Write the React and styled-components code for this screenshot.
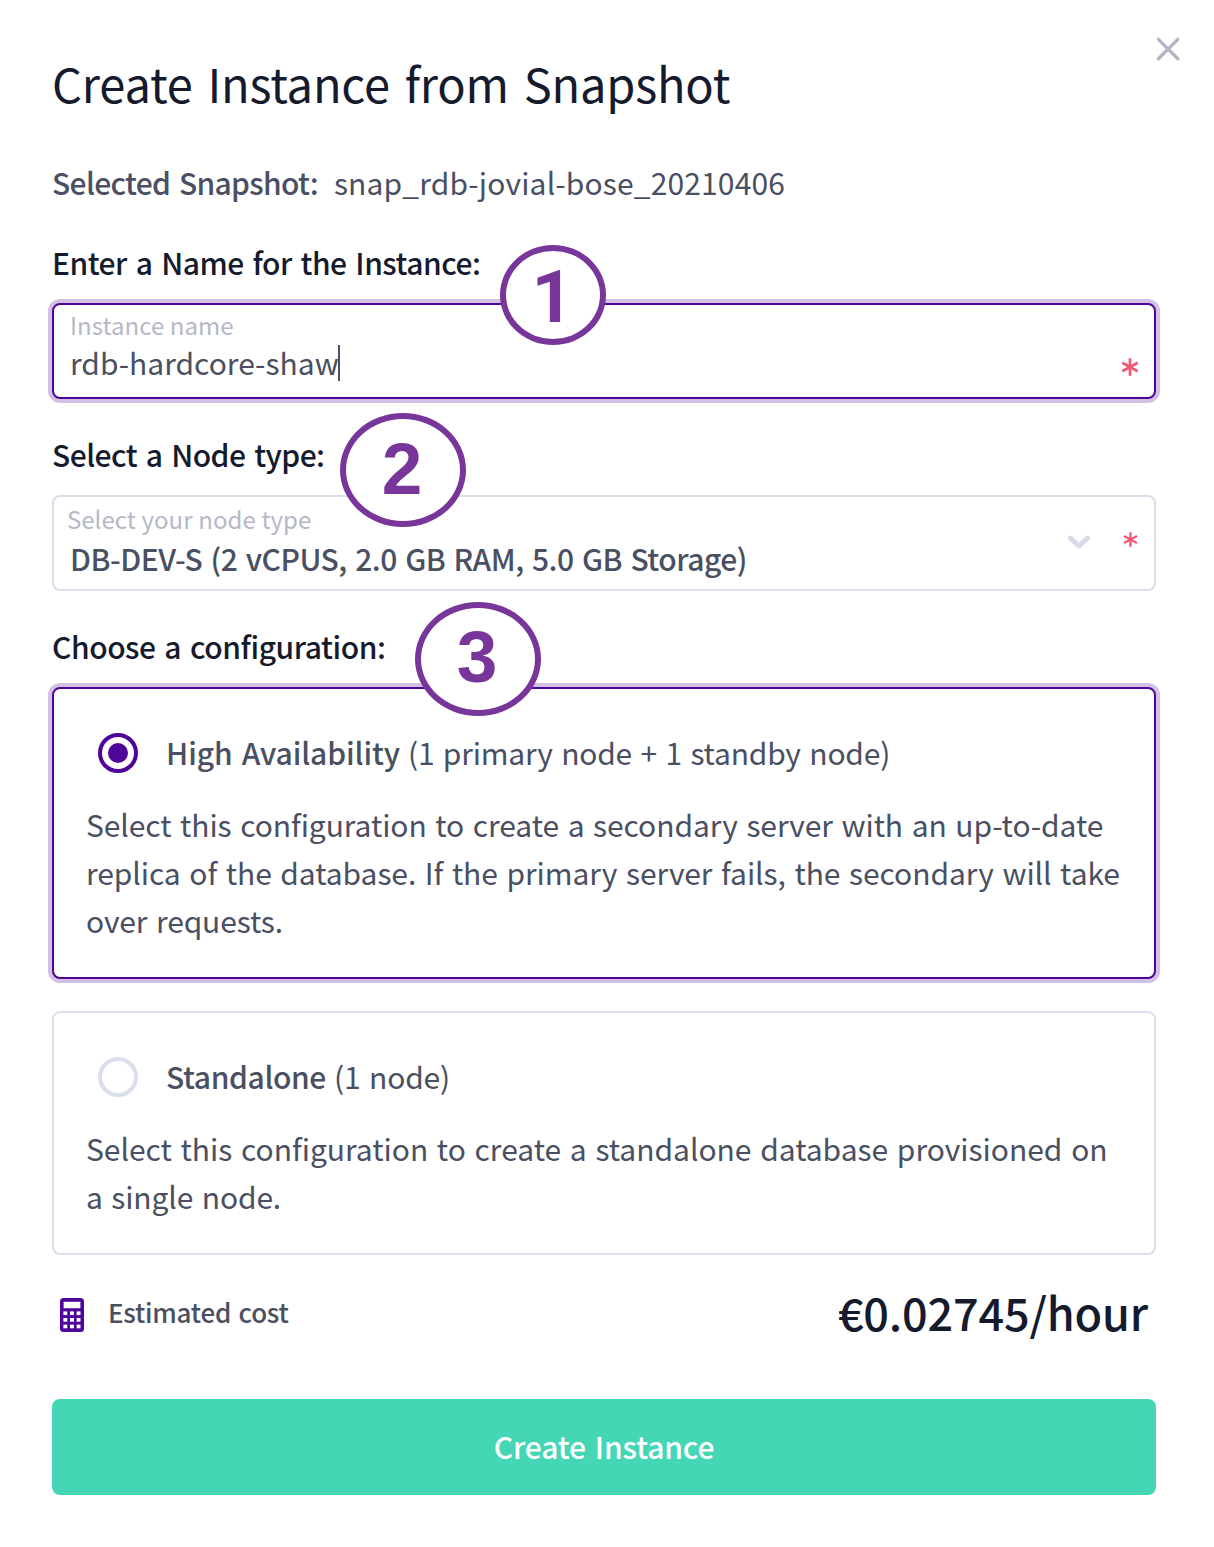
import React from "react";
import styled, { createGlobalStyle } from "styled-components";

const ink = "#151a2d";
const body = "#4a4f62";
const muted = "#b5b8c6";
const purple = "#4f0599";
const line = "#d9dfeb";
const family = '"Noto Sans CJK SC", "Noto Sans", sans-serif';

const GlobalStyle = createGlobalStyle`
  * { box-sizing: border-box; }
  body { margin: 0; background: #fff; font-family: ${family}; }
`;

const Text = styled.span`
  display: ${(p) => (p.$block ? "block" : "inline-block")};
  font-size: ${(p) => p.$size || 30}px;
  font-weight: ${(p) => p.$weight || 400};
  letter-spacing: ${(p) => p.$track || 0}px;
  word-spacing: ${(p) => p.$words || 0}px;
  color: ${(p) => p.$color || body};
  white-space: nowrap;
`;

const Modal = styled.main`
  position: relative;
  display: flex;
  flex-direction: column;
  width: 1214px;
  height: 1547px;
  padding: 52px 58px 52px 52px;
  background: #fff;
`;

const CloseButton = styled.button`
  position: absolute;
  top: 34px;
  right: 31px;
  width: 30px;
  height: 30px;
  padding: 0;
  border: 0;
  background: none;
  svg { display: block; }
`;

const Title = styled.h1`
  margin: 0 0 46px;
  height: 60px;
  line-height: 62px;
  font-size: 47px;
`;

const SnapshotRow = styled.div`
  display: flex;
  gap: 16px;
  height: 48px;
  line-height: 48px;
  margin-bottom: 32px;
`;

const SectionLabel = styled.div`
  position: relative;
  height: 48px;
  line-height: 48px;
  margin-bottom: 17px;
`;

const Badge = styled.span`
  position: absolute;
  z-index: 1;
  left: ${(p) => p.$x}px;
  top: ${(p) => p.$y}px;
  width: ${(p) => p.$w}px;
  height: ${(p) => p.$h}px;
  padding-top: ${(p) => p.$drop || 0}px;
  padding-bottom: ${(p) => p.$lift || 0}px;
  padding-right: ${(p) => p.$nudge || 2}px;
  display: flex;
  align-items: center;
  justify-content: center;
  border: 6px solid #78359a;
  border-radius: 50%;
  background: #fff;
  color: #78359a;
  font: bold 73px/1 ${(p) => p.$font || '"Liberation Sans", Arial'}, sans-serif;
`;

const Box = styled.div`
  flex: none;
  border: 2px solid ${(p) => (p.$active ? purple : line)};
  border-radius: 8px;
  box-shadow: ${(p) => (p.$active ? "0 0 0 4px #d3c0e5" : "none")};
  background: #fff;
`;

const Field = styled(Box)`
  display: flex;
  justify-content: space-between;
  height: 96px;
  margin-bottom: 31px;
  padding: ${(p) => p.$pad};
`;

const FieldText = styled.div`
  display: flex;
  flex-direction: column;
`;

const FieldLine = styled.div`
  display: flex;
  align-items: center;
  height: ${(p) => p.$h}px;
  line-height: ${(p) => p.$h}px;
  padding-left: ${(p) => p.$indent || 0}px;
`;

const Caret = styled.i`
  width: 2px;
  height: 36px;
  margin: 2px 0 0 -1px;
  background: ${body};
`;

const FieldIcons = styled.div`
  display: flex;
  align-items: center;
  gap: ${(p) => p.$gap || 0}px;
  padding-top: ${(p) => p.$top || 0}px;
  padding-bottom: ${(p) => p.$bottom || 0}px;
`;

const RequiredIcon = styled.svg`
  margin-bottom: ${(p) => p.$raise || 0}px;
`;

const Option = styled(Box)`
  height: ${(p) => p.$h}px;
  margin-bottom: ${(p) => p.$after}px;
  padding: 40px 30px 0 32px;
`;

const OptionHead = styled.div`
  display: flex;
  align-items: center;
  height: 48px;
  line-height: 46px;
  padding-left: 12px;
  margin-bottom: 23px;
`;

const OptionText = styled(Text)`
  height: 48px;
`;

const Radio = styled.span`
  flex: none;
  display: grid;
  place-items: center;
  width: 40px;
  height: 40px;
  margin-right: ${(p) => p.$after}px;
  border: 4px solid ${(p) => (p.$checked ? purple : line)};
  border-radius: 50%;
  &::after {
    content: "";
    width: 20px;
    height: 20px;
    border-radius: 50%;
    background: ${(p) => (p.$checked ? purple : "transparent")};
  }
`;

const OptionNote = styled(OptionText)`
  margin-left: ${(p) => p.$before}px;
`;

const Description = styled.p`
  margin: 0;
  line-height: 48px;
`;

const CostRow = styled.div`
  display: flex;
  align-items: center;
  height: 64px;
  line-height: 64px;
  margin-bottom: 56px;
  padding: 0 8px;
`;

const CostLabel = styled(Text)`
  flex: 1;
  margin-left: 24px;
  padding-top: 2px;
`;

const Price = styled(Text)`
  padding-top: 2px;
`;

const CalcIcon = styled.svg`
  display: block;
  margin-top: 8px;
`;

const Submit = styled.button`
  flex: none;
  height: 96px;
  padding: 0 0 2px;
  border: 0;
  border-radius: 8px;
  background: #45d6b5;
  font-family: inherit;
`;

const Required = ({ size, raise }) => (
  <RequiredIcon $raise={raise} width={size} height={size} viewBox="0 0 18 18" fill="none" stroke="#ef5774" strokeWidth="2.700">
    <path d="M9 .3v17.400M1.300 4.700l15.400 8.600M16.700 4.700 1.300 13.300" />
  </RequiredIcon>
);

const Chevron = () => (
  <svg width="24" height="16" viewBox="0 0 24 16" fill="none" stroke="#d4dae7" strokeWidth="5" strokeLinecap="round" strokeLinejoin="round">
    <path d="M3.5 4.2 12 12l8.500-7.800" />
  </svg>
);

const Calculator = () => (
  <CalcIcon width="24" height="34" viewBox="0 0 24 34">
    <rect width="24" height="34" rx="3.500" fill={purple} />
    <rect x="3.600" y="3.800" width="16.800" height="6.400" fill="#fff" />
    {[13.4, 20, 26.6].map((y) =>
      [3.4, 10, 16.6].map((x) => <rect key={`${x}-${y}`} x={x} y={y} width="3.900" height="3.700" fill="#fff" />)
    )}
  </CalcIcon>
);

export default function App() {
  return (
    <>
      <GlobalStyle />
      <Modal>
        <CloseButton aria-label="Close">
          <svg width="30" height="30" viewBox="0 0 30 30" stroke="#b2b6c5" strokeWidth="3.400" strokeLinecap="round">
            <path d="M5.400 5.400l19.400 19.400M24.800 5.400 5.400 24.800" />
          </svg>
        </CloseButton>
        <Title>
          <Text $size={47} $track={-0.2} $words={4.5} $color={ink}>Create Instance from Snapshot</Text>
        </Title>
        <SnapshotRow>
          <Text $weight={500} $track={-0.66} $words={2.5}>Selected Snapshot:</Text>
          <Text $track={0.14}>snap_rdb-jovial-bose_20210406</Text>
        </SnapshotRow>

        <SectionLabel>
          <Text $weight={500} $track={-0.49} $words={2.5} $color={ink}>Enter a Name for the Instance:</Text>
          <Badge $x={448} $y={7} $w={106} $h={100} $drop={4} $nudge={1} $font="Roboto">1</Badge>
        </SectionLabel>
        <Field $active $pad="5px 15px 0 16px">
          <FieldText>
            <FieldLine $h={30}><Text $size={24} $track={0.05} $color={muted}>Instance name</Text></FieldLine>
            <FieldLine $h={44}><Text>rdb-hardcore-shaw</Text><Caret /></FieldLine>
          </FieldText>
          <FieldIcons $top={26}><Required size={18} /></FieldIcons>
        </Field>

        <SectionLabel>
          <Text $weight={500} $track={-0.53} $words={2.5} $color={ink}>Select a Node type:</Text>
          <Badge $x={288} $y={-17} $w={126} $h={114} $lift={3}>2</Badge>
        </SectionLabel>
        <Field $pad="7px 16px 0 13px">
          <FieldText>
            <FieldLine $h={30}><Text $size={24} $words={0.5} $color={muted}>Select your node type</Text></FieldLine>
            <FieldLine $h={48} $indent={3}>
              <Text $weight={500} $track={-0.49} $words={2.1}>DB-DEV-S (2 vCPUS, 2.0 GB RAM, 5.0 GB Storage)</Text>
            </FieldLine>
          </FieldText>
          <FieldIcons $gap={32} $bottom={10}><Chevron /><Required size={15} raise={4} /></FieldIcons>
        </Field>

        <SectionLabel>
          <Text $weight={500} $track={-0.44} $words={2.5} $color={ink}>Choose a configuration:</Text>
          <Badge $x={363} $y={-20} $w={126} $h={114} $lift={5}>3</Badge>
        </SectionLabel>
        <Option $active $h={292} $after={32}>
          <OptionHead>
            <Radio $checked $after={28} />
            <OptionText $weight={500} $track={-0.09} $words={2.5}>High Availability</OptionText>
            <OptionNote $before={8} $track={-0.21} $words={2}>(1 primary node + 1 standby node)</OptionNote>
          </OptionHead>
          <Description>
            <Text $block $track={-0.08} $words={2}>Select this configuration to create a secondary server with an up-to-date</Text>
            <Text $block $track={-0.07} $words={2}>replica of the database. If the primary server fails, the secondary will take</Text>
            <Text $block $track={-0.12} $words={2}>over requests.</Text>
          </Description>
        </Option>
        <Option $h={244} $after={24}>
          <OptionHead>
            <Radio $after={28} />
            <OptionText $weight={500} $track={-0.38}>Standalone</OptionText>
            <OptionNote $before={8} $track={-0.16} $words={2}>(1 node)</OptionNote>
          </OptionHead>
          <Description>
            <Text $block $track={-0.02} $words={2}>Select this configuration to create a standalone database provisioned on</Text>
            <Text $block $track={-0.14} $words={2}>a single node.</Text>
          </Description>
        </Option>

        <CostRow>
          <Calculator />
          <CostLabel $size={26} $weight={500} $track={-0.25} $words={2}>Estimated cost</CostLabel>
          <Price $size={45} $weight={500} $track={-0.18} $color={ink}>€0.02745/hour</Price>
        </CostRow>
        <Submit>
          <Text $weight={500} $track={-0.15} $words={2.5} $color="#fff">Create Instance</Text>
        </Submit>
      </Modal>
    </>
  );
}
